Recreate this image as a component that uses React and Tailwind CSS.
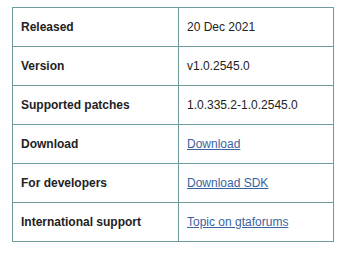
const rows = [
  { label: 'Released', value: '20 Dec 2021' },
  { label: 'Version', value: 'v1.0.2545.0' },
  { label: 'Supported patches', value: '1.0.335.2-1.0.2545.0' },
  { label: 'Download', value: 'Download', link: true },
  { label: 'For developers', value: 'Download SDK', link: true },
  { label: 'International support', value: 'Topic on gtaforums', link: true },
]

export default function App() {
  return (
    <div className="w-[342px] h-[258px] bg-white pt-[7px] pl-[12px]" style={{ fontFamily: '"Liberation Sans", Arial, sans-serif' }}>
      <table className="border-collapse w-[322px] text-[12px] text-[#222]">
        <tbody>
          {rows.map(r => (
            <tr key={r.label} className="h-[39px]">
              <td className="border border-[#6e9c9c] w-[166px] px-[8px] font-bold">{r.label}</td>
              <td className="border border-[#6e9c9c] px-[8px]">
                {r.link
                  ? <a href="#" className="text-[#3a63a0] underline">{r.value}</a>
                  : r.value}
              </td>
            </tr>
          ))}
        </tbody>
      </table>
    </div>
  )
}
